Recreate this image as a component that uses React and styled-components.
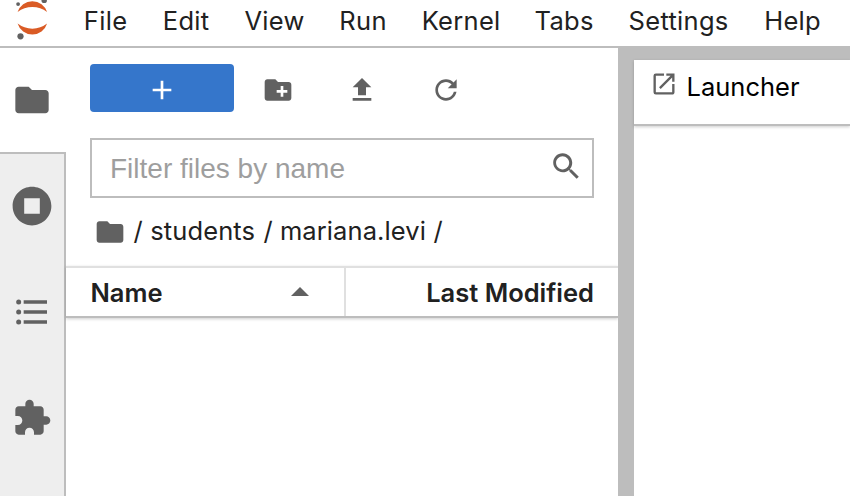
import React from 'react';
import styled, { createGlobalStyle } from 'styled-components';

const GlobalStyle = createGlobalStyle`
  * { box-sizing: border-box; }
  body { margin: 0; overflow: hidden; background: #fff; }
`;

const Shell = styled.div`
  display: flex;
  flex-direction: column;
  width: 850px;
  height: 496px;
  overflow: hidden;
  background: #fff;
  color: #212121;
  font-family: Inter, 'Liberation Sans', sans-serif;
  font-size: 25.5px;
  line-height: 32px;
  white-space: pre;
`;

const MenuBar = styled.header`
  display: flex;
  flex: none;
  height: 48px;
  border-bottom: 2px solid #bdbdbd;
`;

const LogoSlot = styled.div`
  width: 66.6px;
  flex: none;
`;

const MenuItem = styled.div`
  width: ${(p) => p.$width}px;
  flex: none;
  padding-top: 5px;
  text-align: center;
  letter-spacing: 0.3px;
`;

const Workspace = styled.div`
  display: flex;
  flex: 1;
  min-height: 0;
`;

const SideBar = styled.nav`
  display: flex;
  flex-direction: column;
  width: 66px;
  flex: none;
`;

const SideTab = styled.div`
  display: flex;
  justify-content: center;
  align-items: center;
  height: ${(p) => (p.$active ? 104 : 106)}px;
  padding-right: ${(p) => (p.$active ? 2 : 0)}px;
`;

const SideTabs = styled.div`
  flex: 1;
  border-top: 2px solid #bdbdbd;
  border-right: 2px solid #bdbdbd;
  background: #eee;

  & > :first-child {
    height: 105px;
    padding-bottom: 1px;
  }
`;

const FilePanel = styled.section`
  display: flex;
  flex-direction: column;
  width: 552px;
  flex: none;
`;

const Toolbar = styled.div`
  display: flex;
  align-items: center;
  height: 84px;
  padding-left: 24px;
`;

const NewButton = styled.div`
  display: flex;
  align-items: flex-end;
  justify-content: center;
  width: 144px;
  height: 48px;
  margin: 0 2px 4px 0;
  padding-bottom: 6px;
  border-radius: 4px;
  background: #3576cb;
`;

const ToolButton = styled.div`
  display: flex;
  justify-content: center;
  width: 84px;
`;

const FilterBox = styled.div`
  display: flex;
  align-items: center;
  justify-content: space-between;
  height: 60px;
  margin: 6px 24px 0;
  padding: 0 10px 4px 18px;
  border: 2px solid #bdbdbd;
`;

const Placeholder = styled.span`
  padding-top: 6px;
  color: #9e9e9e;
  font: 28px/34px 'Liberation Sans', sans-serif;
`;

const Breadcrumbs = styled.div`
  display: flex;
  align-items: center;
  height: 68px;
  padding-left: 28px;
`;

const Crumb = styled.span`
  margin-left: ${(p) => p.$gap}px;
  letter-spacing: 0.1px;
  transform: translateY(-1px);
`;

const ListHeader = styled.div`
  display: flex;
  flex: none;
  height: 52px;
  border-top: 2px solid #e0e0e0;
  border-bottom: 2px solid #bdbdbd;
  box-shadow: 0 1px 3px rgba(0, 0, 0, 0.2);
  font-weight: 600;
  line-height: 49px;
`;

const NameColumn = styled.div`
  display: flex;
  justify-content: space-between;
  width: 280px;
  padding: 0 28px 0 24.5px;
  border-right: 2px solid #e0e0e0;
`;

const ModifiedColumn = styled.div`
  flex: 1;
  padding-right: 24px;
  text-align: right;
`;

const Dock = styled.main`
  display: flex;
  flex: 1;
  padding: 12px 0 0 16px;
  background: #bdbdbd;
`;

const DockPanel = styled.div`
  flex: 1;
  background: #fff;
`;

const DockTab = styled.div`
  display: flex;
  height: 66px;
  padding: 10px 0 0 16px;
  gap: 8.5px;
  border-bottom: 2px solid #bdbdbd;
  box-shadow: 0 1px 3px rgba(0, 0, 0, 0.2);
  color: #000;
`;

const DockTabLabel = styled.span`
  padding-top: 1px;
`;

const IconSvg = styled.svg`
  display: block;
  flex: none;
  fill: ${(p) => p.$color || '#616161'};
`;

const paths = {
  folder: 'M10 4H4c-1.1 0-1.99.9-1.99 2L2 18c0 1.1.9 2 2 2h16c1.1 0 2-.9 2-2V8c0-1.1-.9-2-2-2h-8l-2-2z',
  list: 'M7 5h14v2H7V5m0 8v-2h14v2H7M4 4.5A1.5 1.5 0 0 1 5.5 6 1.5 1.5 0 0 1 4 7.5 1.5 1.5 0 0 1 2.5 6 1.5 1.5 0 0 1 4 4.5m0 6A1.5 1.5 0 0 1 5.5 12 1.5 1.5 0 0 1 4 13.5 1.5 1.5 0 0 1 2.5 12 1.5 1.5 0 0 1 4 10.5M7 19v-2h14v2H7m-3-2.5A1.5 1.5 0 0 1 5.5 18 1.5 1.5 0 0 1 4 19.5 1.5 1.5 0 0 1 2.5 18 1.5 1.5 0 0 1 4 16.5z',
  puzzle: 'M20.5 11H19V7c0-1.1-.9-2-2-2h-4V3.5C13 2.12 11.88 1 10.5 1S8 2.12 8 3.5V5H4c-1.1 0-1.99.9-1.99 2v3.8H3.5c1.49 0 2.7 1.21 2.7 2.7s-1.21 2.7-2.7 2.7H2V20c0 1.1.9 2 2 2h3.8v-1.5c0-1.49 1.21-2.7 2.7-2.7 1.49 0 2.7 1.21 2.7 2.7V22H17c1.1 0 2-.9 2-2v-4h1.5c1.38 0 2.5-1.12 2.5-2.5S21.88 11 20.5 11z',
  add: 'M19 13h-6v6h-2v-6H5v-2h6V5h2v6h6v2z',
  newFolder: 'M20 6h-8l-2-2H4c-1.11 0-1.99.89-1.99 2L2 18c0 1.11.89 2 2 2h16c1.11 0 2-.89 2-2V8c0-1.11-.89-2-2-2zm-1 8h-3v3h-2v-3h-3v-2h3V9h2v3h3v2z',
  upload: 'M5 20h14v-2H5v2zm0-10h4v6h6v-6h4l-7-7-7 7z',
  refresh: 'M9 13.5c-2.49 0-4.5-2.01-4.5-4.5S6.51 4.5 9 4.5c1.24 0 2.36.52 3.17 1.33L10 8h5V3l-1.76 1.76C12.15 3.68 10.66 3 9 3 5.69 3 3.01 5.69 3.01 9S5.69 15 9 15c2.97 0 5.43-2.16 5.9-5h-1.52c-.46 2-2.24 3.5-4.38 3.5z',
  search: 'M12.1 10.9h-.7l-.2-.2c.8-.9 1.3-2.2 1.3-3.5 0-3-2.4-5.4-5.4-5.4S1.8 4.2 1.8 7.1s2.4 5.4 5.4 5.4c1.3 0 2.5-.5 3.5-1.3l.2.2v.7l4.1 4.1 1.2-1.2-4.1-4.1m-5 0c-2.1 0-3.7-1.7-3.7-3.7s1.7-3.7 3.7-3.7 3.7 1.7 3.7 3.7-1.6 3.7-3.7 3.7z',
  launch: 'M19 19H5V5h7V3H5a2 2 0 0 0-2 2v14a2 2 0 0 0 2 2h14c1.1 0 2-.9 2-2v-7h-2v7zM14 3v2h3.59l-9.83 9.83 1.41 1.41L19 6.41V10h2V3h-7z',
};

function Icon({ name, size, box = 24, color }) {
  return (
    <IconSvg width={size} height={size} viewBox={`0 0 ${box} ${box}`} $color={color}>
      <path d={paths[name]} />
    </IconSvg>
  );
}

function JupyterLogo() {
  return (
    <IconSvg width="66" height="46" viewBox="0 0 66 46">
      <path fill="#da5b25" d="M17.6 12.1A15.4 15.4 0 0 1 47.1 12.1A24 24 0 0 0 17.6 12.1zM17.6 23.6A15.4 15.4 0 0 0 47.1 23.6A24 24 0 0 1 17.6 23.6z" />
      <circle cx="18.1" cy="4.1" r="1.9" />
      <circle cx="44.2" cy="0.4" r="2.7" />
      <circle cx="20.5" cy="36.3" r="3.1" />
    </IconSvg>
  );
}

const menus = [
  ['File', 78],
  ['Edit', 83],
  ['View', 94],
  ['Run', 83],
  ['Kernel', 113],
  ['Tabs', 93],
  ['Settings', 136],
  ['Help', 92],
];

export default function App() {
  return (
    <Shell>
      <GlobalStyle />
      <MenuBar>
        <LogoSlot><JupyterLogo /></LogoSlot>
        {menus.map(([label, width]) => (
          <MenuItem key={label} $width={width}>{label}</MenuItem>
        ))}
      </MenuBar>
      <Workspace>
        <SideBar>
          <SideTab $active><Icon name="folder" size={40} /></SideTab>
          <SideTabs>
            <SideTab>
              <IconSvg width="40" height="40" viewBox="0 0 512 512">
                <path d="M256 8C119 8 8 119 8 256s111 248 248 248 248-111 248-248S393 8 256 8zm100 344c0 2.200-1.800 4-4 4H160c-2.200 0-4-1.800-4-4V160c0-2.200 1.800-4 4-4h192c2.200 0 4 1.800 4 4v192z" />
              </IconSvg>
            </SideTab>
            <SideTab><Icon name="list" size={40} /></SideTab>
            <SideTab><Icon name="puzzle" size={40} /></SideTab>
          </SideTabs>
        </SideBar>
        <FilePanel>
          <Toolbar>
            <NewButton><Icon name="add" size={32} color="#fff" /></NewButton>
            <ToolButton><Icon name="newFolder" size={32} /></ToolButton>
            <ToolButton><Icon name="upload" size={32} /></ToolButton>
            <ToolButton><Icon name="refresh" size={32} box={18} /></ToolButton>
          </Toolbar>
          <FilterBox>
            <Placeholder>Filter files by name</Placeholder>
            <Icon name="search" size={32} box={18} />
          </FilterBox>
          <Breadcrumbs>
            <Icon name="folder" size={32} />
            <Crumb $gap={7.5}>/</Crumb>
            <Crumb $gap={7.5}>students</Crumb>
            <Crumb $gap={8.5}>/</Crumb>
            <Crumb $gap={7}>mariana.levi</Crumb>
            <Crumb $gap={7.5}>/</Crumb>
          </Breadcrumbs>
          <ListHeader>
            <NameColumn>
              <span>Name</span>
              <IconSvg width="32" height="48" viewBox="0 0 32 48">
                <path d="M7 28L16 19L25 28z" />
              </IconSvg>
            </NameColumn>
            <ModifiedColumn>Last Modified</ModifiedColumn>
          </ListHeader>
        </FilePanel>
        <Dock>
          <DockPanel>
            <DockTab>
              <Icon name="launch" size={28} />
              <DockTabLabel>Launcher</DockTabLabel>
            </DockTab>
          </DockPanel>
        </Dock>
      </Workspace>
    </Shell>
  );
}
